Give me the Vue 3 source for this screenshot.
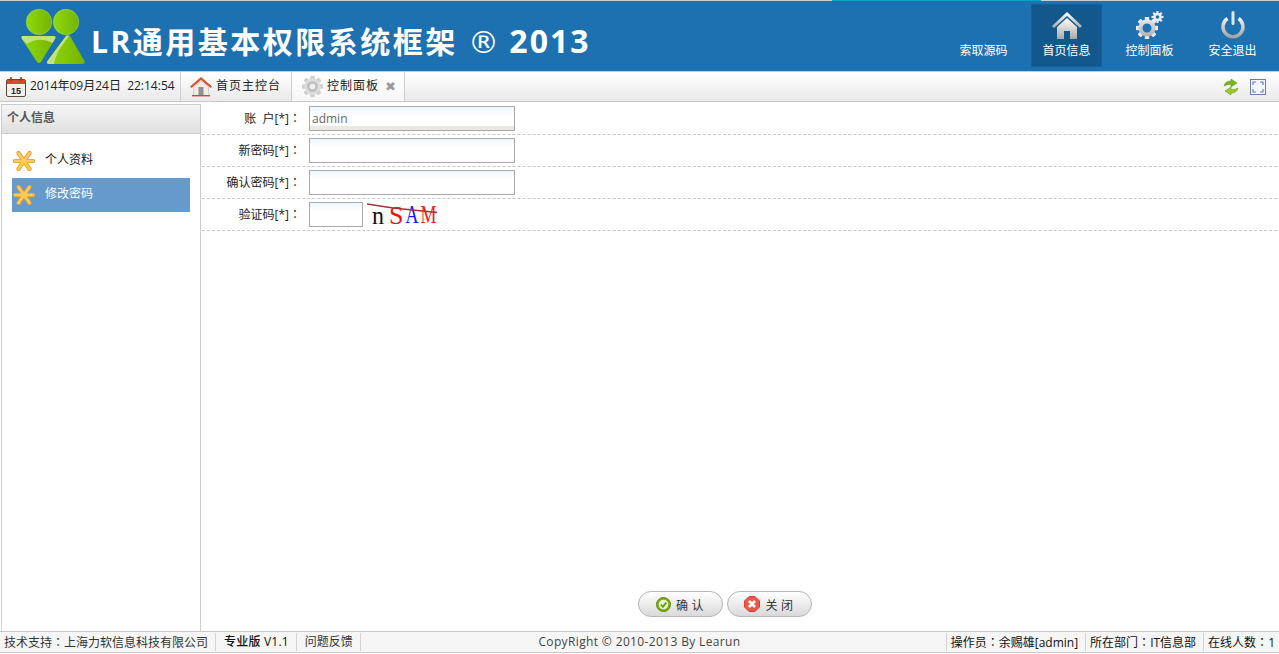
<script setup>
const navItems = [
  { label: '索取源码', icon: '' },
  { label: '首页信息', icon: 'home', active: true },
  { label: '控制面板', icon: 'gear' },
  { label: '安全退出', icon: 'power' }
]
const rows = [
  { label: '账\u00a0\u00a0户[*]', value: 'admin' },
  { label: '新密码[*]', value: '' },
  { label: '确认密码[*]', value: '' }
]
const gearTeeth = [0, 45, 90, 135, 180, 225, 270, 315]
</script>

<template>
  <div class="page">
    <div class="topline"><span></span><i></i></div>
    <header class="header">
      <div class="brand">
        <svg class="logo" width="66" height="58" viewBox="0 0 66 58">
          <defs>
            <linearGradient id="lg" x1="0" x2="1" y1="0" y2="0">
              <stop offset="0" stop-color="#8edb0a" />
              <stop offset="1" stop-color="#76b200" />
            </linearGradient>
          </defs>
          <circle cx="18" cy="14" r="12.7" fill="url(#lg)" stroke="#a6dc50" stroke-width=".6" />
          <circle cx="45" cy="14" r="12.7" fill="url(#lg)" stroke="#a6dc50" stroke-width=".6" />
          <path d="M2.500 28h30q3 0 1.500 3L20 54q-2 2-4 0L1 31q-1.500-3 1.500-3z" fill="url(#lg)" />
          <path d="M2.500 28h30q3 0 1.500 3l-2.500 4Q18 28 6 36l-5-5q-1.500-3 1.500-3z" fill="#c2e27c" />
          <path d="M45 28q2-2 4 0l14.500 25q1 3-2 3H28q-3 0-1.500-3z" fill="url(#lg)" />
          <path d="M45 28q2-1 3 0l-10 14Q34 50 33 56h-5q-3 0-1.500-3z" fill="#c2e27c" />
        </svg>
        <h1 class="title">LR通用基本权限系统框架 <span class="reg">®</span> <span class="year">2013</span></h1>
      </div>
      <nav class="nav">
        <a v-for="item in navItems" :key="item.label" class="nav-item" :class="{ active: item.active }">
          <svg v-if="item.icon === 'home'" width="30" height="27" viewBox="0 0 30 27">
            <defs>
              <linearGradient id="wg" x1="0" x2="0" y1="0" y2="1">
                <stop offset="0" stop-color="#ffffff" />
                <stop offset="1" stop-color="#a9a9a9" />
              </linearGradient>
            </defs>
            <path d="M0 14 15 0l15 14-2 2L15 4 2 16z" fill="url(#wg)" />
            <path d="M5 15 15 6l10 9v12h-7v-8h-6v8H5z" fill="url(#wg)" />
          </svg>
          <svg v-else-if="item.icon === 'gear'" width="28" height="28" viewBox="0 0 28 28">
            <defs>
              <linearGradient id="gg" gradientUnits="userSpaceOnUse" x1="0" x2="0" y1="5" y2="28">
                <stop offset="0" stop-color="#f2f2f2" />
                <stop offset="1" stop-color="#a8a8a8" />
              </linearGradient>
            </defs>
            <g fill="url(#gg)">
              <g v-for="a in gearTeeth" :key="a" :transform="`rotate(${a} 11 17)`"><rect x="8.800" y="6" width="4.400" height="5" rx=".6" /></g>
            </g>
            <circle cx="11" cy="17" r="6.500" fill="none" stroke="url(#gg)" stroke-width="4" />
            <g fill="#ececec">
              <g v-for="a in gearTeeth" :key="a" :transform="`rotate(${a} 21.500 6)`"><rect x="20.400" y="0" width="2.200" height="3" /></g>
            </g>
            <circle cx="21.500" cy="6" r="3" fill="none" stroke="#ececec" stroke-width="2.400" />
          </svg>
          <svg v-else-if="item.icon === 'power'" width="26" height="28" viewBox="0 0 26 28">
            <defs>
              <linearGradient id="pg" x1="0" x2="0" y1="0" y2="1">
                <stop offset="0" stop-color="#f0f0f0" />
                <stop offset="1" stop-color="#a5a5a5" />
              </linearGradient>
            </defs>
            <path d="M7.500 7.500a10 10 0 1 0 11 0" fill="none" stroke="url(#pg)" stroke-width="3.400" />
            <rect x="11.500" y="0" width="3" height="14" rx="1.500" fill="#e4e4e4" />
          </svg>
          <span class="nav-label">{{ item.label }}</span>
        </a>
      </nav>
    </header>

    <div class="toolbar">
      <div class="date cell">
        <svg width="20" height="20" viewBox="0 0 20 20">
          <rect x=".5" y="2.500" width="19" height="17" rx="1.500" fill="#f4f0ea" stroke="#5a4a40" />
          <rect x="1" y="3" width="18" height="4" fill="#c9532c" />
          <rect x="4" y="0" width="2" height="5" rx="1" fill="#b0421f" />
          <rect x="14" y="0" width="2" height="5" rx="1" fill="#b0421f" />
          <text x="10" y="17" text-anchor="middle" class="cal-text">15</text>
        </svg>
        <span>2014年09月24日&nbsp; 22:14:54</span>
      </div>
      <div class="tab">
        <svg width="22" height="21" viewBox="0 0 22 21">
          <path d="M0 10.500 11 1l11 9.500-1.500 1.500L11 4 1.500 12z" fill="#d9532f" />
          <path d="M3.500 11 11 5l7.500 6v8.500h-15z" fill="#f0ece2" stroke="#bdb8ac" stroke-width=".6" />
          <rect x="8.500" y="11" width="5" height="8.500" fill="#8f8f8f" />
          <rect x="2" y="19" width="18" height="1.400" fill="#cf4a28" />
        </svg>
        <span class="spaced">首页主控台</span>
      </div>
      <div class="tab current">
        <svg width="21" height="21" viewBox="0 0 21 21">
          <g fill="#cfcfcf">
            <g v-for="a in gearTeeth" :key="a" :transform="`rotate(${a} 10.500 10.500)`"><rect x="8.500" y="0" width="4" height="21" rx=".8" /></g>
          </g>
          <circle cx="10.500" cy="10.500" r="8" fill="#dedede" />
          <circle cx="10.500" cy="10.500" r="5.500" fill="#c0c0c0" />
          <circle cx="10.500" cy="10.500" r="2.800" fill="#f0f0f0" />
        </svg>
        <span class="spaced">控制面板</span>
        <b class="close">✖</b>
      </div>
      <div class="tools">
        <svg width="16" height="16" viewBox="0 0 16 16">
          <path d="M1 7q1-5 7-5V0l6 4-6 4V5.500Q4 5 1 7z" fill="#7bb814" stroke="#5b8f0c" stroke-width=".5" />
          <path d="M15 9q-1 5-7 5v2l-6-4 6-4v2.500q4 .500 7-1.500z" fill="#9acb2c" stroke="#5b8f0c" stroke-width=".5" />
        </svg>
        <svg width="16" height="16" viewBox="0 0 16 16">
          <rect x=".5" y=".5" width="15" height="15" fill="#f2f5fb" stroke="#6b7cb5" />
          <path d="M3 6V3h3M10 3h3v3M13 10v3h-3M6 13H3v-3" fill="none" stroke="#5d86b8" stroke-width="1.200" />
        </svg>
      </div>
    </div>

    <main class="body">
      <aside class="side">
        <div class="side-head">个人信息</div>
        <ul class="side-list">
          <li class="side-item">
            <svg width="22" height="20" viewBox="0 0 22 20">
              <g stroke-linecap="round" fill="none">
                <path d="M2 10h18M5.500 2l11 16M16.500 2l-11 16" stroke="#e8a030" stroke-width="4.200" />
                <path d="M2 10h18M5.500 2l11 16M16.500 2l-11 16" stroke="#ffcb60" stroke-width="2.400" />
              </g>
            </svg>
            <span>个人资料</span>
          </li>
          <li class="side-item selected">
            <svg width="22" height="20" viewBox="0 0 22 20">
              <g stroke-linecap="round" fill="none">
                <path d="M2 10h18M5.500 2l11 16M16.500 2l-11 16" stroke="#e8a030" stroke-width="4.200" />
                <path d="M2 10h18M5.500 2l11 16M16.500 2l-11 16" stroke="#ffcb60" stroke-width="2.400" />
              </g>
            </svg>
            <span>修改密码</span>
          </li>
        </ul>
      </aside>

      <section class="content">
        <form class="form" @submit.prevent>
          <div v-for="row in rows" :key="row.label" class="row">
            <label class="label">{{ row.label }}<span class="colon">：</span></label>
            <input class="input" type="text" :class="{ filled: row.value }" :value="row.value" />
          </div>
          <div class="row">
            <label class="label">验证码[*]<span class="colon">：</span></label>
            <input class="input small" type="text" />
            <div class="captcha">
              <span class="c1">n</span><span class="c2">S</span><span class="c3">A</span><span class="c4">M</span>
              <svg class="noise" width="72" height="12" viewBox="0 0 72 12">
                <path d="M0 1 26 5 70 9.500" fill="none" stroke="#a83030" stroke-width="1.300" />
              </svg>
            </div>
          </div>
        </form>
        <div class="actions">
          <button class="btn" type="button">
            <svg width="15" height="15" viewBox="0 0 15 15">
              <circle cx="7.500" cy="7.500" r="7" fill="#7cab12" stroke="#5f8a0c" />
              <circle cx="7.500" cy="7.500" r="4.800" fill="#e9f3cf" />
              <path d="M4.800 7.500 6.900 9.800 10.300 5.600" fill="none" stroke="#6c9a10" stroke-width="1.800" />
            </svg>
            <span>确 认</span>
          </button>
          <button class="btn" type="button">
            <svg width="16" height="16" viewBox="0 0 16 16">
              <path d="M5 .5h6L15.500 5v6L11 15.500H5L.5 11V5z" fill="#ea5a4c" stroke="#d8402f" />
              <path d="M5 5l6 6M11 5l-6 6" stroke="#fff" stroke-width="2.600" />
            </svg>
            <span>关 闭</span>
          </button>
        </div>
      </section>
    </main>

    <footer class="footer">
      <div class="foot-side">
        <span class="fcell first">技术支持<span class="colon">：</span>上海力软信息科技有限公司</span>
        <span class="fcell dark wide">专业版 V1.1</span>
        <span class="fcell">问题反馈</span>
      </div>
      <div class="copy">CopyRight © 2010-2013 By Learun</div>
      <div class="foot-side right">
        <span class="fcell dark">操作员<span class="colon">：</span>余赐雄[admin]</span>
        <span class="fcell dark">所在部门<span class="colon">：</span>IT信息部</span>
        <span class="fcell dark last">在线人数<span class="colon">：</span>1</span>
      </div>
    </footer>
  </div>
</template>

<style>
html, body { margin: 0; height: 100%; overflow: hidden; background: #fff; }
</style>

<style scoped>
.page {
  height: 653px;
  display: flex;
  flex-direction: column;
  font: 12px/1.2 "Open Sans", "Noto Sans CJK SC", sans-serif;
  color: #333;
}
.topline { height: 1px; flex: none; background: #c9ced2; display: flex; }
.topline span { width: 832px; }
.topline i { width: 209px; background: #0ea1c0; }
.header {
  height: 70px;
  flex: none;
  background: #1d71b0;
  border-bottom: 1px solid #b9cfe0;
  display: flex;
  justify-content: space-between;
}
.brand { display: flex; align-items: flex-start; padding: 7px 0 0 21px; }
.logo { flex: none; }
.title {
  margin: 11px 0 0 4px;
  font: bold 30px/44px "Open Sans", "Noto Sans CJK SC", sans-serif;
  letter-spacing: 2.5px;
  color: #fff;
  white-space: nowrap;
}
.reg { font-family: "DejaVu Sans", sans-serif; font-size: 31px; font-weight: normal; letter-spacing: 0; }
.year { font-size: 32px; letter-spacing: 2px; }
.nav { display: flex; gap: 12px; padding: 3px 11px 0 0; align-items: flex-start; }
.nav-item {
  width: 71px;
  height: 63px;
  box-sizing: border-box;
  border-radius: 3px;
  display: flex;
  flex-direction: column;
  align-items: center;
  justify-content: flex-end;
  color: #fff;
  padding-bottom: 8px;
}
.nav-item svg { margin-bottom: 4px; }
.nav-item.active { background: #12588c; box-shadow: inset 0 0 0 1px #155f95; }
.nav-label { font-size: 12px; line-height: 16px; }
.toolbar {
  height: 30px;
  box-sizing: border-box;
  flex: none;
  display: flex;
  align-items: stretch;
  background: linear-gradient(#fff, #e9e9e9);
  border-bottom: 1px solid #c8c8c8;
  color: #222;
}
.cell, .tab { display: flex; align-items: center; box-sizing: border-box; border-right: 1px solid #cfcfcf; }
.date { width: 181px; padding-left: 6px; gap: 4px; white-space: nowrap; }
.cal-text { font: bold 9px "Liberation Sans", sans-serif; fill: #222; }
.tab { padding-left: 9px; gap: 4px; width: 111px; }
.tab.current { background: linear-gradient(#fff, #f6f6f6); width: 113px; padding-left: 10px; }
.spaced { letter-spacing: 1px; }
.close { color: #9a9a9a; font-size: 13px; margin-left: 2px; font-family: "DejaVu Sans", sans-serif; font-weight: normal; }
.tools { margin-left: auto; display: flex; align-items: center; gap: 11px; padding-right: 13px; }
.body { flex: 1; display: flex; min-height: 0; }
.side {
  width: 200px;
  box-sizing: border-box;
  margin: 2px 0 0 1px;
  border: 1px solid #cdcdcd;
  border-bottom: 0;
  flex: none;
}
.side-head {
  height: 29px;
  line-height: 26px;
  padding-left: 5px;
  box-sizing: border-box;
  background: linear-gradient(#f5f5f5, #dfdfdf);
  border-bottom: 1px solid #cdcdcd;
  font-weight: bold;
  color: #555;
}
.side-list { list-style: none; margin: 0; padding: 10px 10px 0 10px; }
.side-item {
  height: 34px;
  display: flex;
  align-items: center;
  gap: 10px;
  padding-left: 1px;
  color: #111;
}
.side-item span { padding-bottom: 2px; }
.side-item.selected { background: #6699cc; color: #fff; }
.content { flex: 1; min-width: 0; display: flex; flex-direction: column; padding-left: 1px; }
.form { margin: 1px 2px 0 0; flex: 1; }
.row {
  height: 32px;
  box-sizing: border-box;
  border-bottom: 1px dashed #c8c8c8;
  display: flex;
  align-items: center;
}
.label { width: 99px; flex: none; text-align: right; color: #222; white-space: nowrap; margin-right: 8px; }
.colon { font-family: "Noto Sans CJK TC", sans-serif; }
.input {
  width: 206px;
  height: 25px;
  box-sizing: border-box;
  border: 1px solid #a9a9a9;
  background: linear-gradient(#f0f6fd, #fff 35%);
  padding: 0 2px;
  margin: 0;
  font: 12px "Open Sans", sans-serif;
  color: #666;
  outline: none;
}
.input.filled { background: linear-gradient(#f0f6fd, #fff 40%, #fff 80%, #e9e9e2 85%); }
.input.small { width: 54px; }
.captcha {
  position: relative;
  margin-left: 4px;
  width: 76px;
  height: 24px;
  padding-left: 5px;
  box-sizing: border-box;
  display: flex;
  align-items: baseline;
  font: 24px/26px "Liberation Serif", serif;
  white-space: nowrap;
}
.captcha span { display: block; transform-origin: 50% 85%; }
.c1 { color: #111; margin-right: 5px; transform: scaleY(1.05); }
.c2 { color: #f01010; font-size: 26px; margin-right: 2px; }
.c3 { color: #1a1af0; font-size: 18px; margin-right: 2px; transform: scaleY(1.4); }
.c4 { color: #f02020; font-size: 18px; transform: scaleY(1.4); }
.noise { position: absolute; left: 0; top: 0; }
.actions { display: flex; justify-content: center; gap: 4px; padding: 0 0 14px; margin-right: 32px; }
.btn {
  width: 85px;
  height: 26px;
  border: 1px solid #b5b5b5;
  border-radius: 13px;
  background: linear-gradient(#fff, #d9d9d9);
  display: flex;
  align-items: center;
  justify-content: center;
  gap: 5px;
  padding: 0;
  font: 12px "Noto Sans CJK SC", sans-serif;
  color: #333;
  letter-spacing: .5px;
}
.footer {
  height: 22px;
  flex: none;
  box-sizing: border-box;
  border-top: 1px solid #c8c8c8;
  border-bottom: 1px solid #c8c8c8;
  background: #f6f6f6;
  display: grid;
  grid-template-columns: 1fr auto 1fr;
  align-items: center;
  color: #333;
  white-space: nowrap;
}
.foot-side { display: flex; align-items: center; }
.foot-side.right { justify-content: flex-end; }
.fcell { padding: 0 7px 0 8px; height: 18px; line-height: 18px; border-right: 1px solid #d2d2d2; }
.fcell.first { padding-left: 4px; }
.fcell.wide { font-weight: 500; letter-spacing: .2px; }
.foot-side.right .fcell { border-right: 0; border-left: 1px solid #d2d2d2; padding: 0 7px 0 4px; }
.foot-side.right .fcell.last { padding-right: 4px; }
.dark { color: #111; }
.copy { color: #444; letter-spacing: .36px; }
</style>
